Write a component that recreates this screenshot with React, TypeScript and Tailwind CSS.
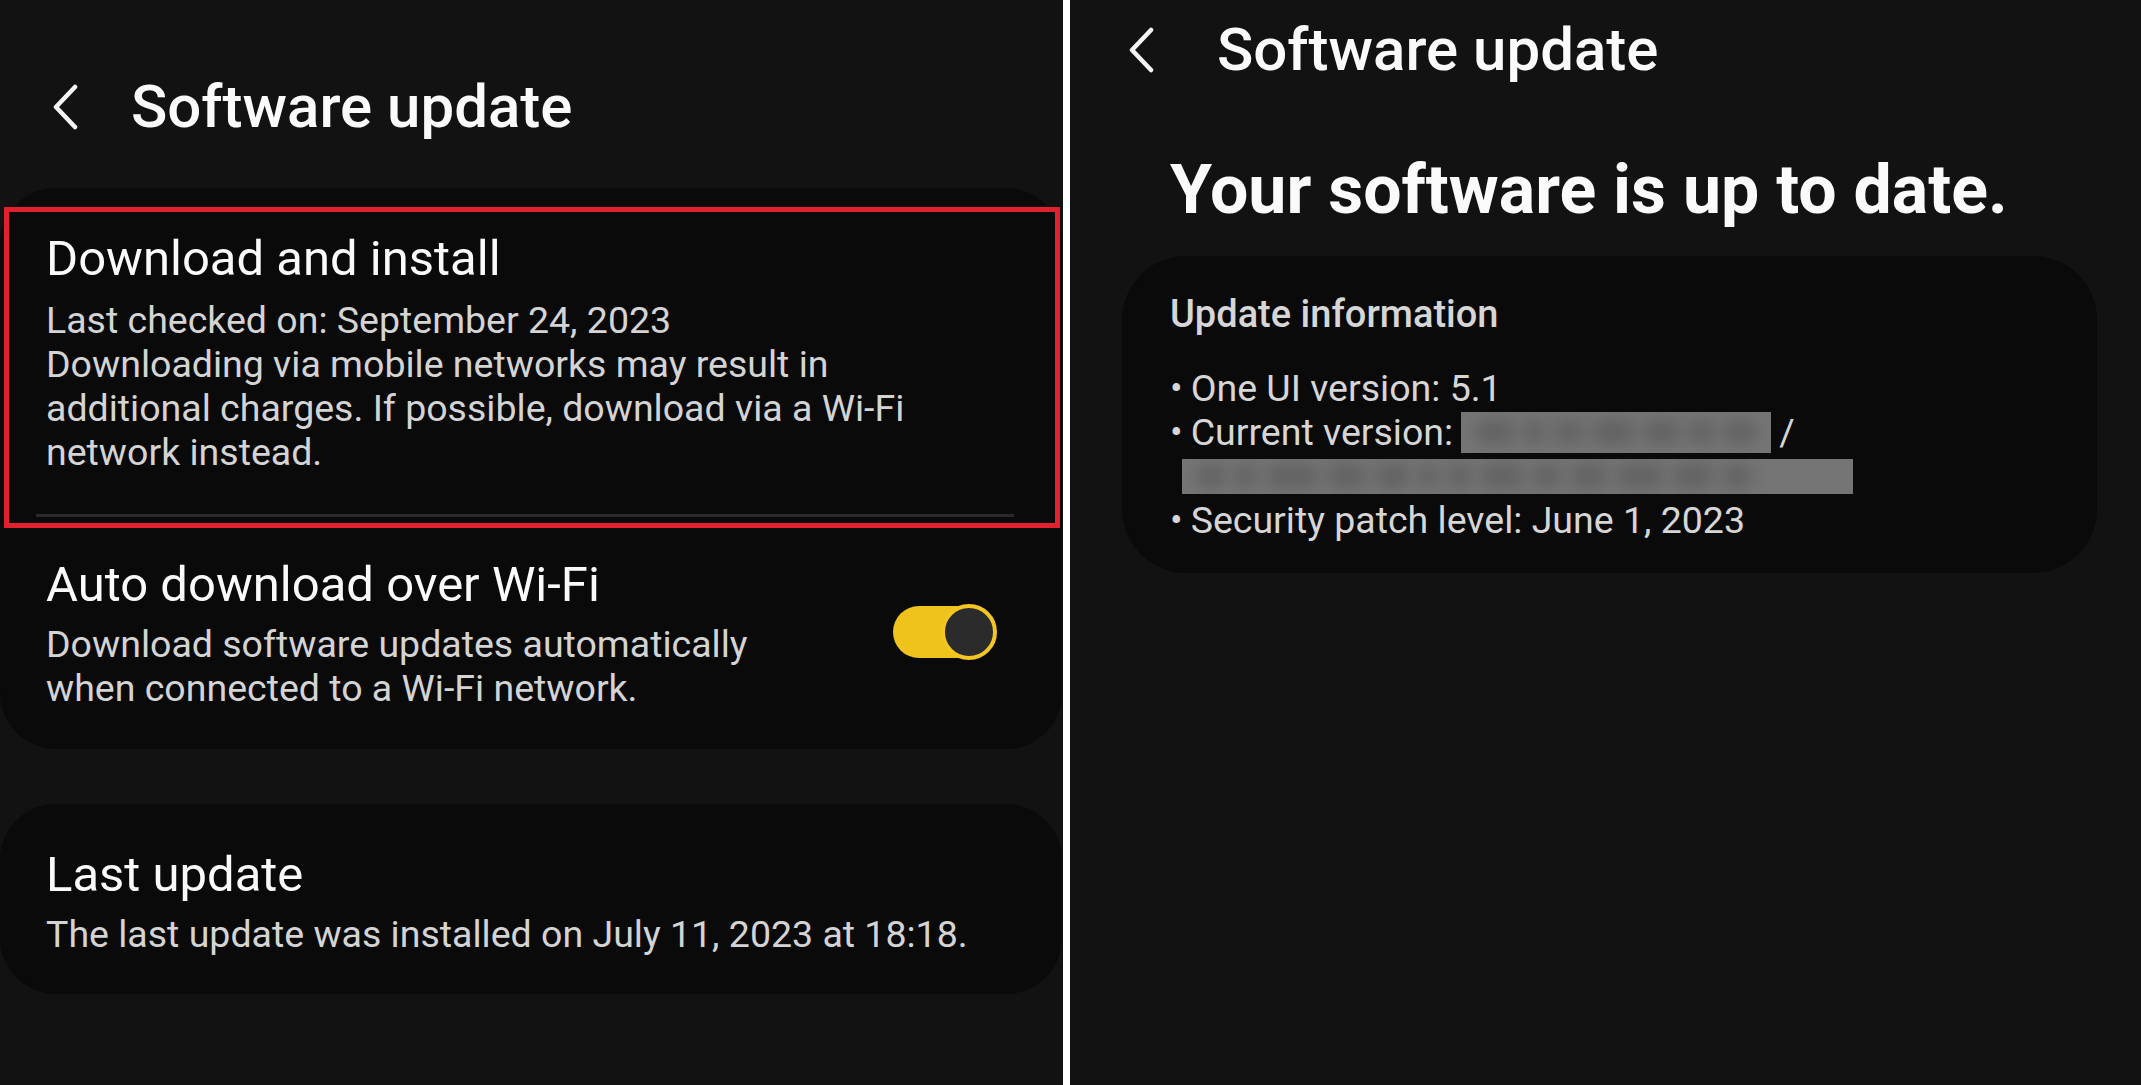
import React from "react";

const font = { fontFamily: "Roboto, 'Noto Sans', sans-serif" };

function Chevron() {
  return (
    <svg width="30" height="46" viewBox="0 0 30 46" fill="none">
      <path d="M25 3 L6 23 L25 43" stroke="#f4f4f4" strokeWidth="4.5" strokeLinecap="round" strokeLinejoin="round" />
    </svg>
  );
}

function Toggle() {
  return (
    <div className="relative mb-[4px] h-[60px] w-[104px] shrink-0">
      <div className="absolute left-0 top-[4px] h-[52px] w-[90px] rounded-full bg-[#f0c21c]" />
      <div className="absolute right-0 top-[2px] h-[56px] w-[56px] rounded-full border-[4px] border-[#f3c623] bg-[#2b2b2b]" />
    </div>
  );
}

// redacted version string, drawn as soft grey smudges
function Blurred({ w, h, blobs }: { w: string; h: string; blobs: number[] }) {
  return (
    <span className={`inline-flex items-center gap-[8px] overflow-hidden bg-[#757575] px-[14px] align-middle ${w} ${h}`}>
      {blobs.map((b, i) => (
        <span
          key={i}
          className="h-[26px] shrink-0 rounded-full bg-[#636363] blur-[8px]"
          style={{ width: b }}
        />
      ))}
    </span>
  );
}

function LeftPanel() {
  return (
    <div className="flex h-full w-[1063px] shrink-0 flex-col bg-[#121212]">
      <div className="flex h-[188px] items-start pt-[82px]">
        <div className="ml-[50px] mt-[2px]">
          <Chevron />
        </div>
        <h1 className="ml-[51px] text-[60px] font-medium leading-[50px] text-[#fafafa]">Software update</h1>
      </div>

      <div className="w-[1062px] rounded-[56px] bg-[#0a0a0a] pt-[19px] pb-[39px]">
        <div className="ml-[4px] mr-[2px] border-[5px] border-[#e1222e] pl-[37px] pt-[19px]">
          <div className="text-[49px] leading-[56px] text-[#fafafa]">Download and install</div>
          <div className="mt-[11px] text-[37.5px] leading-[44px] text-[#d4d4d4]">
            <div>Last checked on: September 24, 2023</div>
            <div>Downloading via mobile networks may result in</div>
            <div>additional charges. If possible, download via a Wi-Fi</div>
            <div>network instead.</div>
          </div>
          <div className="ml-[-10px] mr-[41px] mt-[40px] mb-[6px] h-[3px] bg-[#2a2a2a]" />
        </div>

        <div className="flex items-center pl-[46px] pr-[65px] pt-[29px]">
          <div className="flex-1">
            <div className="text-[49px] leading-[56px] text-[#fafafa]">Auto download over Wi-Fi</div>
            <div className="mt-[9px] text-[37.5px] leading-[44px] text-[#d4d4d4]">
              <div>Download software updates automatically</div>
              <div>when connected to a Wi-Fi network.</div>
            </div>
          </div>
          <Toggle />
        </div>
      </div>

      <div className="mt-[55px] w-[1062px] rounded-[56px] bg-[#0a0a0a] pl-[46px] pt-[43px] pb-[38px]">
        <div className="text-[49px] leading-[56px] text-[#fafafa]">Last update</div>
        <div className="mt-[9px] text-[37.5px] leading-[44px] text-[#d4d4d4]">
          The last update was installed on July 11, 2023 at 18:18.
        </div>
      </div>
    </div>
  );
}

function RightPanel() {
  return (
    <div className="flex h-full flex-1 flex-col bg-[#121212]">
      <div className="flex items-start pt-[25px]">
        <div className="ml-[56px] mt-[2px]">
          <Chevron />
        </div>
        <h1 className="ml-[61px] text-[60px] font-medium leading-[50px] text-[#fafafa]">Software update</h1>
      </div>

      <div className="ml-[100px] mt-[79px] text-[68px] font-bold leading-[72px] text-[#fafafa]">
        Your software is up to date.
      </div>

      <div className="ml-[52px] mt-[30px] w-[975px] rounded-[64px] bg-[#0a0a0a] pl-[48px] pt-[36px] pb-[31px]">
        <div className="text-[38px] font-medium leading-[44px] text-[#d6d6d6]">Update information</div>
        <div className="mt-[30px] text-[37.5px] leading-[44px] text-[#d6d6d6]">
          <div>
            <span className="mr-[8px]">•</span>One UI version: 5.1
          </div>
          <div className="flex items-center">
            <span className="mr-[8px]">•</span>Current version:
            <span className="ml-[8px] flex">
              <Blurred w="w-[310px]" h="h-[41px]" blobs={[40, 22, 30, 44, 36, 28, 34]} />
            </span>
            <span className="ml-[8px]">/</span>
          </div>
          <div className="flex h-[44px] items-center pl-[12px]">
            <Blurred w="w-[671px]" h="h-[35px]" blobs={[30, 24, 52, 40, 36, 20, 26, 44, 30, 38, 48, 42, 30]} />
          </div>
          <div>
            <span className="mr-[8px]">•</span>Security patch level: June 1, 2023
          </div>
        </div>
      </div>
    </div>
  );
}

export default function App() {
  return (
    <div className="flex h-[1085px] w-[2141px] overflow-hidden bg-[#121212]" style={font}>
      <LeftPanel />
      <div className="h-full w-[7px] shrink-0 bg-white" />
      <RightPanel />
    </div>
  );
}
